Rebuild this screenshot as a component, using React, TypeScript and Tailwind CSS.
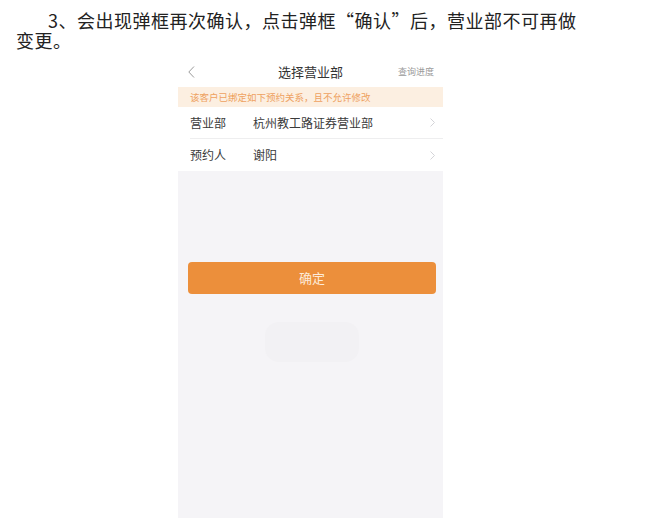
import React from 'react';

const cjk = { fontFamily: '"Noto Sans CJK SC", "Noto Sans", sans-serif' };

function ChevronRight() {
  return (
    <svg width="5" height="9" viewBox="0 0 5 9" fill="none">
      <path d="M0.5 0.5 L4.5 4.5 L0.5 8.5" stroke="#d4d4d8" strokeWidth="1" />
    </svg>
  );
}

function Row({ label, value, divider }: { label: string; value: string; divider?: boolean }) {
  return (
    <div className="flex h-[32px] items-center pl-[12px]">
      <div className={`flex h-full flex-1 items-center pr-[8px] ${divider ? 'border-b border-[#eeeeef]' : ''}`}>
        <span className="w-[63px] text-[12px] text-[#3a3a3a]">{label}</span>
        <span className="flex-1 text-[12px] text-[#3a3a3a]">{value}</span>
        <ChevronRight />
      </div>
    </div>
  );
}

export default function App() {
  return (
    <div className="flex h-[518px] w-[650px] flex-col overflow-hidden bg-white" style={cjk}>
      <p className="pl-[16px] pt-[10px] indent-[32px] text-[18px] leading-[20px] tracking-[0.5px] text-[#222]">
        3、会出现弹框再次确认，点击弹框“确认”后，营业部不可再做
        <br />
        变更。
      </p>

      <div className="ml-[178px] mt-[6px] flex w-[265px] flex-1 flex-col bg-[#f5f4f7]">
        <div className="relative flex h-[31px] items-center justify-center bg-white">
          <svg className="absolute left-[10px] top-[10px]" width="7" height="12" viewBox="0 0 7 12" fill="none">
            <path d="M6 0.5 L0.8 6 L6 11.5" stroke="#9a9a9a" strokeWidth="1" />
          </svg>
          <span className="text-[13px] text-[#333]">选择营业部</span>
          <span className="absolute right-[9px] text-[9px] text-[#9b9b9b]">查询进度</span>
        </div>

        <div className="flex h-[20px] items-center bg-[#fcefe1] pl-[12px] text-[9.5px] text-[#eea160]">
          该客户已绑定如下预约关系，且不允许修改
        </div>

        <div className="bg-white">
          <Row label="营业部" value="杭州教工路证券营业部" divider />
          <Row label="预约人" value="谢阳" />
        </div>

        <div className="pl-[10px] pr-[7px] pt-[91px]">
          <div className="flex h-[32px] items-center justify-center rounded-[4px] bg-[#ec8f3b] text-[13px] text-[#fdebd9]">
            确定
          </div>
        </div>

        <div className="ml-[87px] mt-[28px] h-[40px] w-[94px] rounded-[14px] bg-[#f2f1f4]" />
      </div>
    </div>
  );
}
